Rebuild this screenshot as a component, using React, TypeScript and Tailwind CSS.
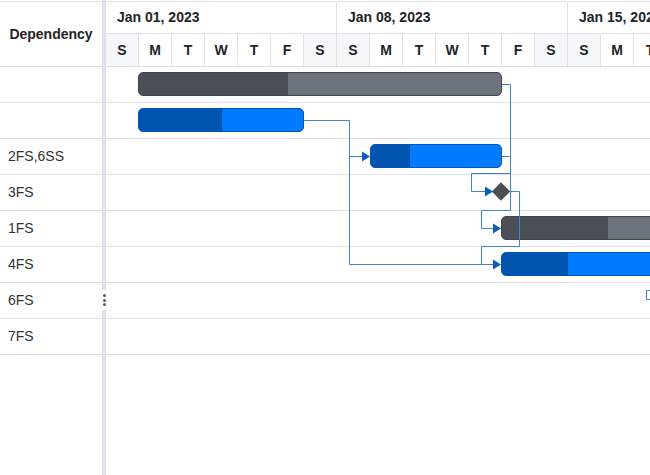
import React from "react";

const DAY = 33;
const dayLetters = ["S", "M", "T", "W", "T", "F", "S"];
const weeks = ["Jan 01, 2023", "Jan 08, 2023", "Jan 15, 2023"];
const deps = ["", "", "2FS,6SS", "3FS", "1FS", "4FS", "6FS", "7FS"];

type Task = {
  row: number;
  left: number; // px from timeline start
  width: number;
  done: number; // progress width in px
  kind: "parent" | "child" | "milestone";
};

// positions measured on the chart (timeline starts at x=106)
const tasks: Task[] = [
  { row: 0, left: 32, width: 364, done: 149, kind: "parent" },
  { row: 1, left: 32, width: 166, done: 83, kind: "child" },
  { row: 2, left: 264, width: 132, done: 39, kind: "child" },
  { row: 3, left: 395, width: 0, done: 0, kind: "milestone" },
  { row: 4, left: 395, width: 300, done: 106, kind: "parent" },
  { row: 5, left: 395, width: 300, done: 66, kind: "child" },
];

const TaskBar = ({ task }: { task: Task }) => {
  if (task.kind === "milestone") {
    return (
      <div
        className="absolute top-[10px] h-[13px] w-[13px] -translate-x-1/2 rotate-45 bg-[#4b5058]"
        style={{ left: task.left }}
      />
    );
  }
  const parent = task.kind === "parent";
  return (
    <div
      className={
        parent
          ? "absolute top-[5px] flex h-[24px] overflow-hidden rounded-[5px] border border-[#40464e] bg-[#6c737d]"
          : "absolute top-[5px] flex h-[24px] overflow-hidden rounded-[5px] border border-[#0056b3] bg-[#007bff]"
      }
      style={{ left: task.left, width: task.width }}
    >
      <div
        className={parent ? "h-full bg-[#4b5058]" : "h-full bg-[#0054b0]"}
        style={{ width: task.done }}
      />
    </div>
  );
};

const Arrow = ({ x, y }: { x: number; y: number }) => (
  <polygon points={`${x - 8},${y - 5} ${x},${y} ${x - 8},${y + 5}`} fill="#0b5cc0" />
);

const Connectors = () => (
  <svg className="pointer-events-none absolute left-0 top-0 h-[420px] w-[560px]">
    {/* page coordinates, shifted back to the body origin */}
    <g transform="translate(-106,-67)" fill="none" stroke="#3f83d3" strokeWidth="1">
      <path d="M502 84.5 H510.5 V210.5 H481.5 V228.5 H494" />
      <path d="M502 156.5 H510.5 M510.5 173.5 H471.5 V191.5 H485" />
      <path d="M304 120.5 H349.5 V264.5 H494 M349.5 156.5 H363" />
      <path d="M510 191.5 H519.5 V246.5 H481.5 V264.5" />
      <path d="M650 290.5 H646.5 V299.5 H650" />
    </g>
    <g transform="translate(-106,-67)">
      <Arrow x={501} y={228.5} />
      <Arrow x={493} y={191.5} />
      <Arrow x={370} y={156.5} />
      <Arrow x={501} y={264.5} />
    </g>
  </svg>
);

export default function App() {
  return (
    <div className="flex h-[475px] w-[650px] overflow-hidden bg-white font-['Liberation_Sans',Arial,sans-serif] text-[14px] text-[#212529]">
      {/* grid side */}
      <div className="w-[102px] shrink-0 pt-px">
        <div className="flex h-[66px] items-center justify-center border-y border-[#e0e0e6] font-bold">
          Dependency
        </div>
        {deps.map((d, i) => (
          <div key={i} className="flex h-[36px] items-center border-b border-[#e0e0e6] pl-2 text-[#333]">
            {d}
          </div>
        ))}
      </div>

      {/* splitter */}
      <div className="relative w-[4px] shrink-0 bg-[#e0e1e8]">
        <div className="absolute left-0 top-[290px] flex h-[20px] w-[4px] flex-col items-center justify-center gap-[1.5px] bg-white">
          <span className="h-[3px] w-[3px] rounded-full bg-[#55595f]" />
          <span className="h-[3px] w-[3px] rounded-full bg-[#55595f]" />
          <span className="h-[3px] w-[3px] rounded-full bg-[#55595f]" />
        </div>
      </div>

      {/* timeline */}
      <div className="min-w-0 flex-1 overflow-hidden pt-px">
        <div className="w-[700px] border-t border-[#e0e0e6]">
          <div className="flex h-[32px] border-b border-[#e0e0e6]">
            {weeks.map((w) => (
              <div key={w} className="flex w-[231px] shrink-0 items-center border-r border-[#e0e0e6] pl-[11px] font-bold">
                {w}
              </div>
            ))}
          </div>
          <div className="flex h-[33px] border-b border-[#e0e0e6]">
            {weeks.map((w) =>
              dayLetters.map((d, i) => (
                <div
                  key={w + i}
                  className={
                    i === 0 || i === 6
                      ? "flex w-[33px] shrink-0 items-center justify-center border-r border-[#e0e0e6] bg-[#f6f7f9] font-bold"
                      : "flex w-[33px] shrink-0 items-center justify-center border-r border-[#e0e0e6] font-bold"
                  }
                >
                  {d}
                </div>
              ))
            )}
          </div>
        </div>

        <div className="relative w-[700px]">
          {deps.map((_, i) => (
            <div key={i} className="relative h-[36px] border-b border-[#e0e0e6]">
              {tasks
                .filter((t) => t.row === i)
                .map((t) => (
                  <TaskBar key={t.row} task={t} />
                ))}
            </div>
          ))}
          <Connectors />
        </div>
      </div>
    </div>
  );
}

// keep DAY for reference of the scale used above
void DAY;
